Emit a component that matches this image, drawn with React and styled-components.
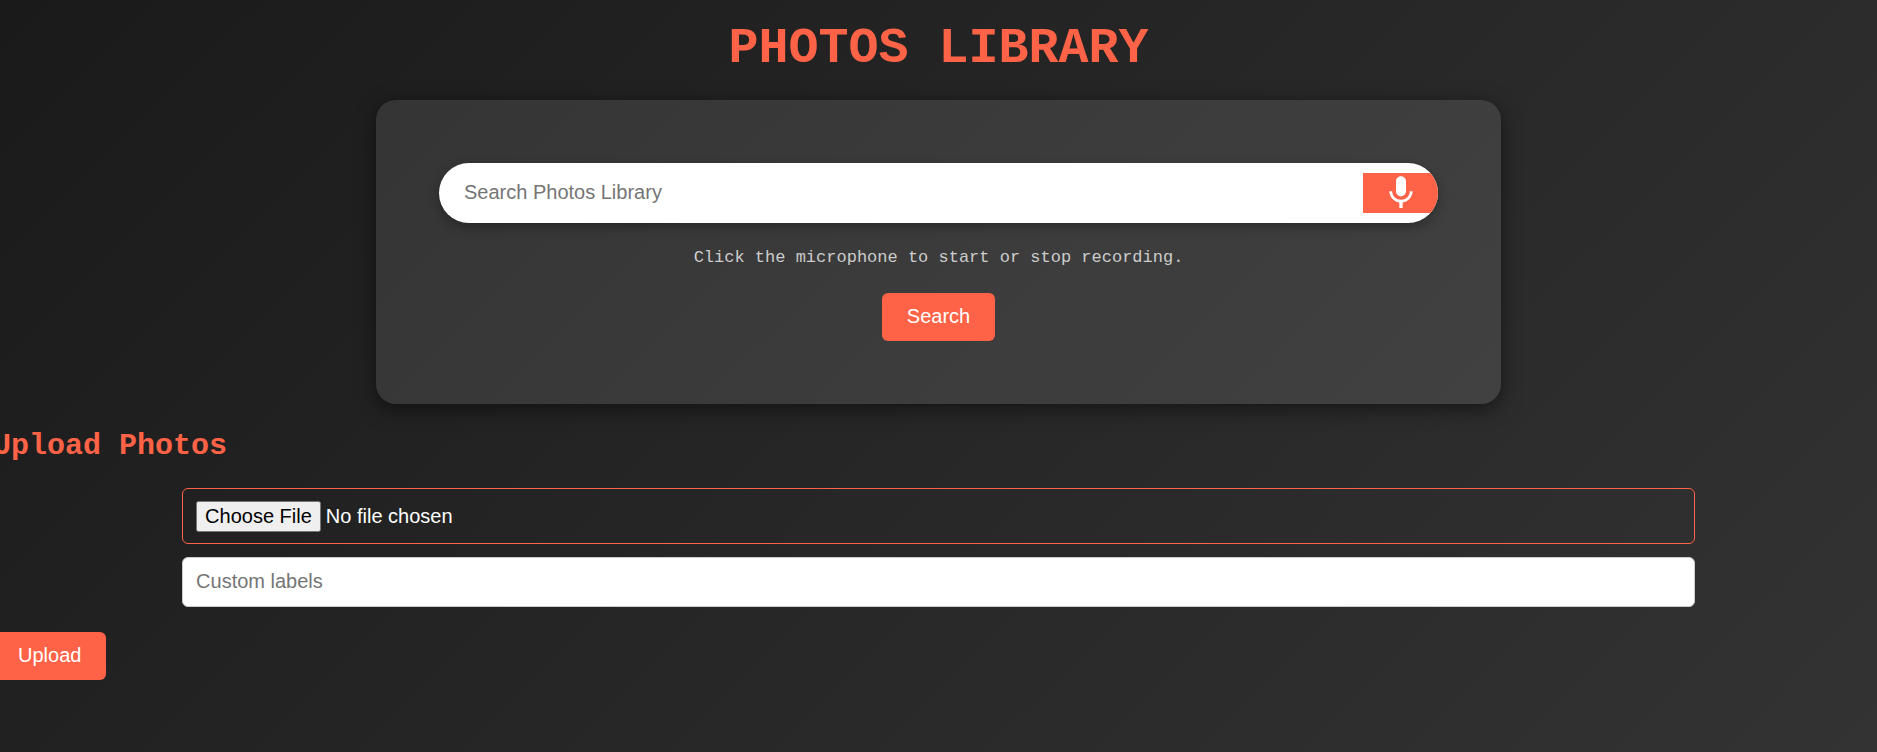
import React from "react";
import styled, { createGlobalStyle } from "styled-components";

const accent = "#ff6347";
const mono = '"Liberation Mono", "Courier New", monospace';
const sans = '"Liberation Sans", Arial, sans-serif';

const GlobalStyle = createGlobalStyle`
  * { box-sizing: border-box; }
  body { margin: 0; background: #333; }
  button, input { font-family: ${sans}; font-size: 20px; }
`;

const Page = styled.main`
  display: flex;
  flex-direction: column;
  align-items: center;
  min-height: 100vh;
  overflow-x: hidden;
  background: linear-gradient(135deg, #1a1a1a, #333);
  color: #fff;
  font-family: ${mono};
`;

const Title = styled.h1`
  margin: 20px 0 22px;
  color: ${accent};
  font-size: 50px;
  line-height: 58px;
  text-transform: uppercase;
`;

const SearchPanel = styled.form`
  display: flex;
  flex-direction: column;
  align-items: center;
  width: 60%;
  max-width: 1125px;
  padding: 63px;
  border-radius: 20px;
  background: rgba(255, 255, 255, 0.1);
  box-shadow: 0 5px 20px rgba(0, 0, 0, 0.5);
`;

const SearchBar = styled.div`
  display: flex;
  align-items: center;
  width: 100%;
  height: 60px;
  border-radius: 30px;
  overflow: hidden;
  background: #fff;
  box-shadow: 0 4px 12px rgba(0, 0, 0, 0.3);
`;

const SearchInput = styled.input`
  flex: 1;
  min-width: 0;
  height: 100%;
  padding: 0 25px 2px;
  border: 0;
  outline: none;
  background: transparent;
`;

const MicButton = styled.button`
  display: flex;
  align-items: center;
  justify-content: center;
  width: 75px;
  height: 40px;
  padding: 0;
  border: 0;
  background: ${accent};
  color: #fff;
  cursor: pointer;
`;

const Hint = styled.p`
  margin: 25px 0;
  color: #ccc;
  font-size: 17px;
  line-height: 20px;
`;

const ActionButton = styled.button`
  height: 48px;
  padding: 0 25px 2px;
  border: 0;
  border-radius: 6px;
  background: ${accent};
  color: #fff;
  cursor: pointer;
`;

const UploadSection = styled.form`
  display: flex;
  flex-direction: column;
  align-items: flex-start;
  align-self: stretch;
  margin: 25px -7px;
`;

const SectionTitle = styled.h2`
  margin: 0 0 25px;
  color: ${accent};
  font-size: 30px;
  line-height: 34px;
`;

const Field = styled.input`
  align-self: center;
  width: 80%;
  border-radius: 6px;
`;

const FileField = styled(Field)`
  height: 56px;
  margin-bottom: 13px;
  padding: 12px 13px;
  border: 1px solid ${accent};
  color: #fff;

  &::file-selector-button {
    padding: 2px 7px;
    margin-right: 5px;
  }
`;

const TextField = styled(Field)`
  height: 50px;
  margin-bottom: 25px;
  padding: 0 13px 2px;
  border: 1px solid #ccc;
  background: #fff;
  color: #000;
`;

function MicIcon() {
  return (
    <svg width="40" height="40" viewBox="0 0 24 24" fill="currentColor" aria-hidden="true">
      <path d="M12 14c1.66 0 2.99-1.34 2.99-3L15 5c0-1.66-1.34-3-3-3S9 3.34 9 5v6c0 1.66 1.34 3 3 3zm5.3-3c0 3-2.54 5.1-5.3 5.1S6.7 14 6.7 11H5c0 3.41 2.72 6.23 6 6.72V21h2v-3.28c3.28-.48 6-3.3 6-6.72h-1.7z" />
    </svg>
  );
}

export default function App() {
  return (
    <>
      <GlobalStyle />
      <Page>
        <Title>Photos Library</Title>
        <SearchPanel onSubmit={(e) => e.preventDefault()}>
          <SearchBar>
            <SearchInput type="text" placeholder="Search Photos Library" aria-label="Search Photos Library" />
            <MicButton type="button" aria-label="Start or stop recording">
              <MicIcon />
            </MicButton>
          </SearchBar>
          <Hint>Click the microphone to start or stop recording.</Hint>
          <ActionButton type="submit">Search</ActionButton>
        </SearchPanel>
        <UploadSection onSubmit={(e) => e.preventDefault()}>
          <SectionTitle>Upload Photos</SectionTitle>
          <FileField type="file" aria-label="Photo to upload" />
          <TextField type="text" placeholder="Custom labels" aria-label="Custom labels" />
          <ActionButton type="submit">Upload</ActionButton>
        </UploadSection>
      </Page>
    </>
  );
}
